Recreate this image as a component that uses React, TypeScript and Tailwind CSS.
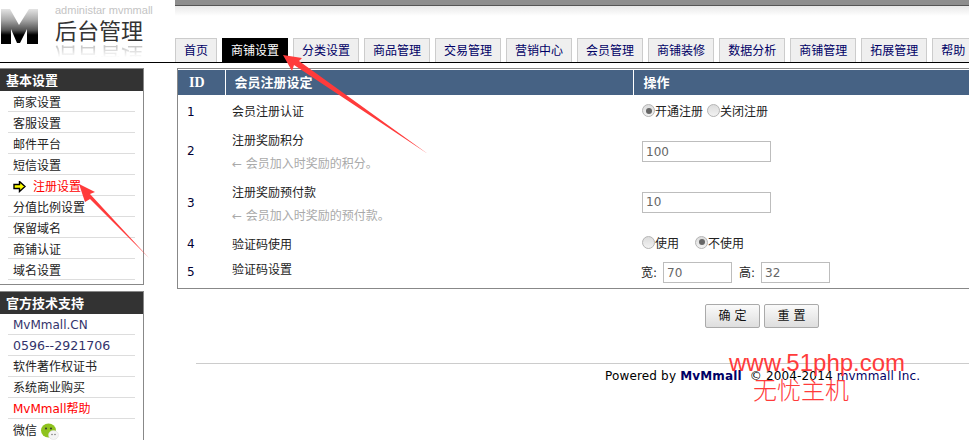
const tabs = ["首页", "商铺设置", "分类设置", "商品管理", "交易管理", "营销中心", "会员管理", "商铺装修", "数据分析", "商铺管理", "拓展管理", "帮助"];
const basicLinks = ["商家设置", "客服设置", "邮件平台", "短信设置", "注册设置", "分值比例设置", "保留域名", "商铺认证", "域名设置"];

function Radio({ checked }: { checked?: boolean }) {
  return (
    <span className="w-[13px] h-[13px] rounded-full border border-[#b5b5b5] bg-gradient-to-b from-[#dcdcdc] to-[#f2f2f2] flex items-center justify-center shrink-0 -mt-[3px]">
      {checked && <span className="w-[6px] h-[6px] rounded-full bg-[#666]" />}
    </span>
  );
}

function TextBox({ value, width }: { value: string; width: string }) {
  return (
    <input
      readOnly
      value={value}
      className={`${width} h-[21px] border border-[#bdbdbd] px-[3px] text-[12px] text-[#666] outline-none`}
    />
  );
}

function Logo() {
  return (
    <svg width="39" height="37" viewBox="0 0 39 37">
      <defs>
        <linearGradient id="m" x1="0" y1="0" x2="0" y2="1">
          <stop offset="0" stopColor="#e4e4e4" />
          <stop offset="0.3" stopColor="#aaa" />
          <stop offset="0.6" stopColor="#555" />
          <stop offset="0.74" stopColor="#000" />
          <stop offset="1" stopColor="#000" />
        </linearGradient>
      </defs>
      <polygon points="1,0 10,0 19,16 29,0 38,0 38,35 27,35 27,20 20,34 17,34 11,20 11,35 1,35" fill="url(#m)" />
    </svg>
  );
}

function Tab({ label, active }: { label: string; active: boolean }) {
  return (
    <div
      className={`h-[24px] px-2 shrink-0 text-[12px] leading-[25px] border border-b-0 ${
        active ? "bg-black border-black text-white" : "bg-[#efefef] border-[#cccccc] text-[#000066]"
      }`}
    >
      {label}
    </div>
  );
}

export default function App() {
  return (
    <div
      className="relative w-[969px] h-[440px] overflow-hidden bg-white text-[12px] text-[#222]"
      style={{ fontFamily: '"DejaVu Sans", "Noto Sans CJK SC", sans-serif' }}
    >
      {/* header */}
      <div className="flex h-[63px] border-b border-black">
        <div className="w-[175px] shrink-0 flex items-start pt-[9px]">
          <Logo />
          <div className="ml-[16px] -mt-[5px] w-[100px]">
            <div
              className="text-[11px] leading-[12px] text-[#c4c4c4] whitespace-nowrap"
              style={{ fontFamily: '"Liberation Sans", sans-serif' }}
            >
              administar mvmmall
            </div>
            <div className="text-[22px] leading-[26px] mt-[3px] text-[#333] whitespace-nowrap">后台管理</div>
            <div className="text-[22px] leading-[22px] h-[22px] -mt-[1px] -scale-y-100 bg-[linear-gradient(to_top,#bbbbbb,transparent_60%)] bg-clip-text text-transparent whitespace-nowrap">
              后台管理
            </div>
          </div>
        </div>
        <div className="flex-1 flex flex-col min-w-0">
          <div className="h-[6px] shrink-0 bg-[#8e8e8e] border-b border-[#555]" />
          <div className="h-[10px] shrink-0 bg-gradient-to-b from-[#e8e8e8] to-white" />
          <div className="flex gap-[5px] mt-auto overflow-hidden">
            {tabs.map((t, i) => (
              <Tab key={t + i} label={t} active={i === 1} />
            ))}
          </div>
        </div>
      </div>

      <div className="flex mt-[5px]">
        {/* sidebar */}
        <div className="w-[144px] shrink-0">
          <div className="border-y border-r border-[#888] h-[217px]">
            <div className="h-[22px] bg-[#333] text-white font-bold text-[13px] leading-[24px] pl-[6px]">基本设置</div>
            <ul className="px-2">
              {basicLinks.map((l) => (
                <li
                  key={l}
                  className={`h-[21px] pt-[3px] border-b border-[#ddd] pl-[5px] flex items-center ${
                    l === "注册设置" ? "text-[#ff0000]" : ""
                  }`}
                >
                  {l === "注册设置" && (
                    <svg width="13" height="12" viewBox="0 0 13 12" className="mr-[7px]">
                      <polygon points="1,3.5 6.5,3.5 6.5,0.5 12,5.5 6.5,10.5 6.5,7.5 1,7.5" fill="#ffff00" stroke="#000" strokeWidth="1.4" />
                    </svg>
                  )}
                  {l}
                </li>
              ))}
            </ul>
          </div>
          <div className="border-t border-r border-[#888] mt-[6px] h-[160px]">
            <div className="h-[22px] bg-[#333] text-white font-bold text-[13px] leading-[24px] pl-[6px]">官方技术支持</div>
            <ul className="px-2">
              <li className="h-[21px] leading-[22px] border-b border-[#ddd] pl-[5px] text-[#33336b]">MvMmall.CN</li>
              <li className="h-[21px] leading-[22px] border-b border-[#ddd] pl-[5px] text-[#33336b] text-[12.6px]">0596--2921706</li>
              <li className="h-[21px] leading-[22px] border-b border-[#ddd] pl-[5px]">软件著作权证书</li>
              <li className="h-[21px] leading-[22px] border-b border-[#ddd] pl-[5px]">系统商业购买</li>
              <li className="h-[21px] leading-[22px] border-b border-[#ddd] pl-[5px] text-[#ff0000]">MvMmall帮助</li>
              <li className="h-[24px] pl-[5px] flex items-center gap-[4px]">
                微信
                <svg width="18" height="17" viewBox="0 0 18 17">
                  <ellipse cx="7.5" cy="7.5" rx="7.5" ry="7" fill="#8fc31f" />
                  <circle cx="5" cy="5.5" r="1" fill="#333" />
                  <circle cx="10" cy="5.5" r="1" fill="#333" />
                  <ellipse cx="12.5" cy="12" rx="5" ry="4.5" fill="#f4f4f4" stroke="#ddd" strokeWidth="0.5" />
                  <circle cx="11" cy="11.5" r="0.7" fill="#666" />
                  <circle cx="14" cy="11.5" r="0.7" fill="#666" />
                </svg>
              </li>
            </ul>
          </div>
        </div>

        {/* main */}
        <div className="flex-1 ml-[33px] min-w-0">
          <div className="border border-[#888] border-r-0 pt-px">
            <table className="w-full table-fixed border-collapse">
              <colgroup>
                <col className="w-[47px]" />
                <col className="w-[408px]" />
                <col />
              </colgroup>
              <thead>
                <tr className="h-[25px] bg-[#466284] text-white font-bold text-[13px]">
                  <th className="text-left pl-[11px] text-[14px] border-r border-white" style={{ fontFamily: '"Liberation Serif", serif' }}>ID</th>
                  <th className="text-left pl-[9px] border-r border-white">会员注册设定</th>
                  <th className="text-left pl-[10px]">操作</th>
                </tr>
              </thead>
              <tbody>
                <tr className="h-[32px]">
                  <td className="pl-[9px] pt-[2px] text-[#000033]">1</td>
                  <td className="pl-[7px] pt-[2px]">会员注册认证</td>
                  <td className="pl-[9px] pt-[2px]">
                    <div className="flex items-center">
                      <Radio checked />
                      <span>开通注册</span>
                      <span className="w-[4px]" />
                      <Radio />
                      <span>关闭注册</span>
                    </div>
                  </td>
                </tr>
                <tr className="h-[49px]">
                  <td className="pl-[9px] pb-[2px] text-[#000033]">2</td>
                  <td className="pl-[7px] pt-[2px]">
                    <div>注册奖励积分</div>
                    <div className="mt-[5px] text-[#aaa]">← 会员加入时奖励的积分。</div>
                  </td>
                  <td className="pl-[9px]">
                    <TextBox value="100" width="w-[129px]" />
                  </td>
                </tr>
                <tr className="h-[52px]">
                  <td className="pl-[9px] pt-[2px] text-[#000033]">3</td>
                  <td className="pl-[7px] pt-[4px]">
                    <div>注册奖励预付款</div>
                    <div className="mt-[5px] text-[#aaa]">← 会员加入时奖励的预付款。</div>
                  </td>
                  <td className="pl-[9px]">
                    <TextBox value="10" width="w-[129px]" />
                  </td>
                </tr>
                <tr className="h-[29px]">
                  <td className="pl-[9px] pt-[2px] text-[#000033]">4</td>
                  <td className="pl-[7px] pt-[4px]">验证码使用</td>
                  <td className="pl-[9px] pt-[2px]">
                    <div className="flex items-center">
                      <Radio />
                      <span className="mr-[16px]">使用</span>
                      <Radio checked />
                      <span>不使用</span>
                    </div>
                  </td>
                </tr>
                <tr className="h-[31px]">
                  <td className="pl-[9px] pb-[2px] text-[#000033]">5</td>
                  <td className="pl-[7px] pb-[6px]">验证码设置</td>
                  <td className="pl-[8px]">
                    <div className="flex items-center">
                      <span className="w-[22px]">宽:</span>
                      <TextBox value="70" width="w-[69px]" />
                      <span className="ml-[7px] w-[22px]">高:</span>
                      <TextBox value="32" width="w-[69px]" />
                    </div>
                  </td>
                </tr>
              </tbody>
            </table>
          </div>

          <div className="flex justify-end gap-[4px] mt-[15px] mr-[150px]">
            <button className="w-[55px] h-[24px] border border-[#aaa] rounded-[2px] bg-gradient-to-b from-[#fafafa] to-[#dedede] text-[#111] text-[12px]">确 定</button>
            <button className="w-[55px] h-[24px] border border-[#aaa] rounded-[2px] bg-gradient-to-b from-[#fafafa] to-[#dedede] text-[#111] text-[12px]">重 置</button>
          </div>

          <div className="ml-[19px] mt-[35px] border-t border-[#ccc] pt-[3px] pl-[409px] text-[12px] tracking-[0.16px] text-black whitespace-nowrap">
            Powered by <b className="text-[#000066]">MvMmall</b>&nbsp; © 2004-2014 <span className="text-[#000066]">mvmmall Inc.</span>
          </div>
        </div>
      </div>

      {/* annotations laid over the screenshot */}
      <svg className="absolute inset-0 pointer-events-none" width="969" height="440" viewBox="0 0 969 440">
        <polygon points="283,55 302,58 299,61 428,154 294,65 292,71" fill="#ff3b3b" />
        <polygon points="79,184 95,192 90,194 149,258 90,199 85,202" fill="#ff3b3b" />
      </svg>
      <div className="absolute left-[729px] top-[349px] text-[24px] leading-[28px] text-[#ff3b3b] whitespace-nowrap" style={{ fontFamily: '"Liberation Sans", sans-serif' }}>
        www.51php.com
      </div>
      <div className="absolute left-[753px] top-[376px] text-[24px] leading-[30px] font-light text-[#ff3b3b] whitespace-nowrap">
        无忧主机
      </div>
    </div>
  );
}
